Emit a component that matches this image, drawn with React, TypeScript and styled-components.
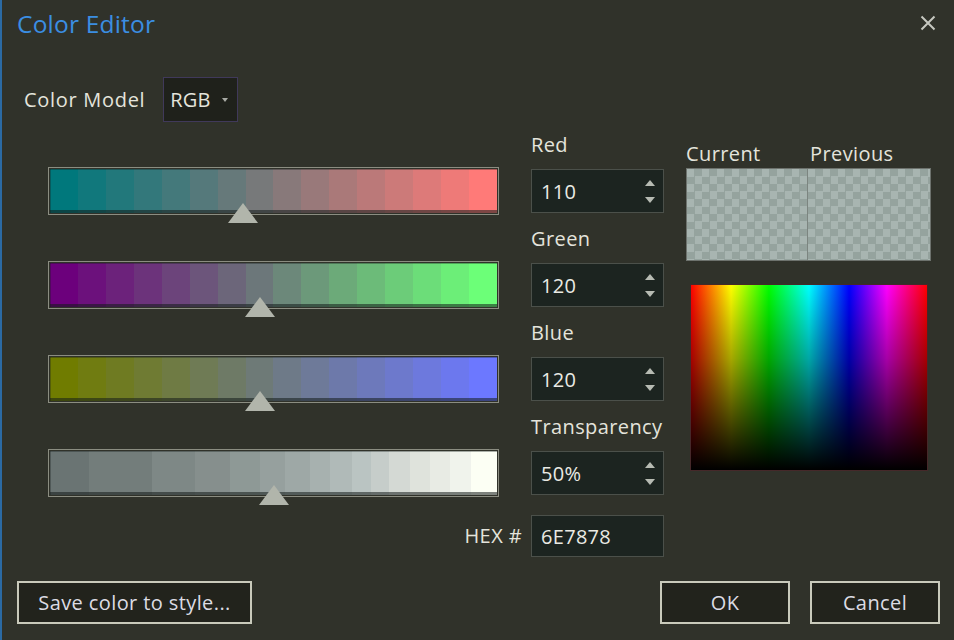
import styled, { createGlobalStyle } from "styled-components";

const GlobalStyle = createGlobalStyle`
  html, body {
    margin: 0;
    padding: 0;
    background: #30322a;
  }
  body {
    font-family: "Open Sans", "Noto Sans", "Liberation Sans", sans-serif;
    color: #e4e4dc;
  }
`;

const BG = "#30322a";

const Dialog = styled.div`
  width: 954px;
  height: 640px;
  box-sizing: border-box;
  border-left: 2px solid #2b6aa3;
  background: ${BG};
  display: flex;
  flex-direction: column;
`;

const Header = styled.div`
  height: 46px;
  display: flex;
  align-items: center;
  justify-content: space-between;
  padding: 0 17px 0 15px;
`;

const Title = styled.h1`
  margin: 0;
  font-size: 24.5px;
  font-weight: 400;
  color: #3b8ee2;
  letter-spacing: 0.2px;
`;

const CloseButton = styled.button`
  border: 0;
  background: none;
  padding: 0;
  width: 18px;
  height: 18px;
  display: flex;
  align-items: center;
  justify-content: center;
`;

const Body = styled.div`
  padding-left: 22px;
`;

const ModelRow = styled.div`
  margin-top: 31px;
  height: 45px;
  display: flex;
  align-items: center;
  gap: 18px;
`;

const Label = styled.span`
  font-size: 20px;
  letter-spacing: 0.4px;
  line-height: 28px;
  color: #e4e4dc;
  white-space: nowrap;
`;

const ModelLabel = styled(Label)`
  letter-spacing: 0.7px;
`;

const Dropdown = styled.div`
  box-sizing: border-box;
  width: 75px;
  height: 45px;
  background: #1f211b;
  border: 1px solid #40395a;
  display: flex;
  align-items: center;
  justify-content: space-between;
  padding: 0 9px 0 6px;
  font-size: 20px;
  letter-spacing: 0.2px;
`;

const Caret = styled.span`
  width: 0;
  height: 0;
  border-left: 3.5px solid transparent;
  border-right: 3.5px solid transparent;
  border-top: 4px solid #a8aaa4;
`;

const Main = styled.div`
  margin-top: 9px;
  margin-left: 24px;
  display: grid;
  grid-template-columns: 451px 133px 245px;
  column-gap: 32px;
  align-items: start;
`;

const SliderColumn = styled.div`
  padding-top: 36px;
  display: flex;
  flex-direction: column;
  gap: 46px;
`;

const SliderFrame = styled.div`
  position: relative;
  box-sizing: border-box;
  height: 48px;
  border: 1px solid #8b8d81;
  padding: 1px;
`;

const SliderTrack = styled.div<{ $bands: string }>`
  height: 100%;
  background: ${(p) => p.$bands};
  box-shadow: inset 0 -3px 0 rgba(20, 28, 26, 0.55),
    inset 0 1px 0 rgba(20, 28, 26, 0.35), inset 1px 0 0 rgba(20, 28, 26, 0.3);
`;

const Thumb = styled.div`
  position: absolute;
  bottom: -9px;
  width: 0;
  height: 0;
  margin-left: -15px;
  border-left: 15px solid transparent;
  border-right: 15px solid transparent;
  border-bottom: 20px solid #b1b5ab;
`;

const SpinColumn = styled.div`
  display: flex;
  flex-direction: column;
`;

const SpinGroup = styled.div`
  display: flex;
  flex-direction: column;
  gap: 10px;
  margin-bottom: 12px;
`;

const SpinBox = styled.div`
  box-sizing: border-box;
  height: 44px;
  background: #1c2420;
  border: 1px solid #4b504a;
  display: flex;
  align-items: center;
  justify-content: space-between;
  padding: 0 8px 0 9px;
  font-size: 20px;
  letter-spacing: 0.3px;
  color: #eaeae4;
`;

const Arrows = styled.div`
  display: flex;
  flex-direction: column;
  gap: 11px;
`;

const Arrow = styled.span<{ $down?: boolean }>`
  width: 0;
  height: 0;
  border-left: 5.5px solid transparent;
  border-right: 5.5px solid transparent;
  ${(p) =>
    p.$down
      ? "border-top: 6px solid #b7bbb3;"
      : "border-bottom: 6px solid #b7bbb3;"}
`;

const PreviewColumn = styled.div`
  margin-left: -10px;
  width: 245px;
  padding-top: 9px;
  display: flex;
  flex-direction: column;
`;

const PreviewLabels = styled.div`
  display: grid;
  grid-template-columns: 124px 1fr;
`;

const Swatch = styled.div`
  box-sizing: border-box;
  height: 93px;
  border: 1px solid #6d726d;
  display: grid;
  grid-template-columns: 121px 1fr;
`;

const SwatchHalf = styled.div<{ $left?: boolean }>`
  background-color: #a8b5b1;
  background-image: conic-gradient(
    #95a39e 25%,
    transparent 0 50%,
    #95a39e 0 75%,
    transparent 0
  );
  background-size: 15px 15px;
  ${(p) => (p.$left ? "border-right: 1px solid #7c8580;" : "")}
`;

const Spectrum = styled.div`
  margin: 24px 0 0 5px;
  width: 236px;
  height: 185px;
  box-shadow: 0 0 0 1px rgba(90, 30, 40, 0.5);
  background: linear-gradient(
      to bottom,
      rgba(0, 0, 0, 0) 0%,
      rgba(0, 0, 0, 0.35) 40%,
      #000 100%
    ),
    linear-gradient(
      to right,
      #ff0000 0%,
      #ffff00 17%,
      #00ff00 33%,
      #00ffff 50%,
      #0000ff 67%,
      #ff00ff 83%,
      #ff0000 100%
    );
`;

const HexRow = styled.div`
  grid-column: 1 / 3;
  margin-top: 8px;
  display: flex;
  justify-content: flex-end;
  align-items: center;
  gap: 9px;
`;

const HexInput = styled(SpinBox)`
  width: 133px;
  height: 42px;
`;

const Footer = styled.div`
  margin-top: auto;
  padding: 0 14px 16px 15px;
  display: flex;
  align-items: center;
  gap: 20px;
`;

const Button = styled.button<{ $wide?: boolean }>`
  box-sizing: border-box;
  height: 43px;
  width: ${(p) => (p.$wide ? "235px" : "130px")};
  background: #22231c;
  border: 2px solid #c9cabb;
  color: #dcdce4;
  font-family: inherit;
  font-size: 20px;
  letter-spacing: 0.4px;
  padding: 0;
`;

const Spacer = styled.div`
  flex: 1;
`;

// evenly spaced colour steps between two rgb values
const bands = (from: number[], to: number[], steps: number) => {
  const stops: string[] = [];
  for (let i = 0; i < steps; i++) {
    const t = i / (steps - 1);
    const c = from.map((f, k) => Math.round(f + (to[k] - f) * t));
    const a = ((i / steps) * 100).toFixed(2);
    const b = (((i + 1) / steps) * 100).toFixed(2);
    stops.push(`rgb(${c.join(",")}) ${a}% ${b}%`);
  }
  return `linear-gradient(to right, ${stops.join(", ")})`;
};

// the alpha strip ramps unevenly, so its steps are listed by hand
const alphaSteps: [number, string][] = [
  [8.7, "#6a7473"],
  [22.9, "#737d7b"],
  [32.5, "#7e8886"],
  [40.3, "#868f8d"],
  [47, "#8e9996"],
  [52.6, "#96a09e"],
  [58.1, "#9ea8a6"],
  [62.6, "#a7b1af"],
  [67.5, "#b0bab8"],
  [71.9, "#bac4c2"],
  [75.9, "#c6cdca"],
  [80.5, "#d4d9d4"],
  [85, "#dfe3dc"],
  [89.5, "#e8ebe4"],
  [94.2, "#f0f3ec"],
  [100, "#fcfff4"],
];

const alphaBands = () => {
  let prev = 0;
  const stops = alphaSteps.map(([end, color]) => {
    const s = `${color} ${prev}% ${end}%`;
    prev = end;
    return s;
  });
  return `linear-gradient(to right, ${stops.join(", ")})`;
};

const channels = [
  { label: "Red", value: "110", pos: 110 / 255, fill: bands([0, 120, 124], [255, 122, 120], 16) },
  { label: "Green", value: "120", pos: 120 / 255, fill: bands([108, 0, 124], [108, 255, 120], 16) },
  { label: "Blue", value: "120", pos: 120 / 255, fill: bands([112, 124, 0], [108, 120, 255], 16) },
  { label: "Transparency", value: "50%", pos: 0.5, fill: alphaBands() },
];

const App = () => {
  return (
    <>
      <GlobalStyle />
      <Dialog>
        <Header>
          <Title>Color Editor</Title>
          <CloseButton aria-label="Close">
            <svg width="16" height="16" viewBox="0 0 16 16">
              <path d="M1.5 1.5 L14.5 14.5 M14.5 1.5 L1.5 14.5" stroke="#c6c8c0" strokeWidth="2" />
            </svg>
          </CloseButton>
        </Header>

        <Body>
          <ModelRow>
            <ModelLabel>Color Model</ModelLabel>
            <Dropdown>
              RGB
              <Caret />
            </Dropdown>
          </ModelRow>

          <Main>
            {/* sliders */}
            <SliderColumn>
              {channels.map((c) => (
                <SliderFrame key={c.label}>
                  <SliderTrack $bands={c.fill} />
                  <Thumb style={{ left: `${c.pos * 100}%` }} />
                </SliderFrame>
              ))}
            </SliderColumn>

            {/* numeric inputs */}
            <SpinColumn>
              {channels.map((c) => (
                <SpinGroup key={c.label}>
                  <Label>{c.label}</Label>
                  <SpinBox>
                    {c.value}
                    <Arrows>
                      <Arrow />
                      <Arrow $down />
                    </Arrows>
                  </SpinBox>
                </SpinGroup>
              ))}
            </SpinColumn>

            {/* preview */}
            <PreviewColumn>
              <PreviewLabels>
                <Label>Current</Label>
                <Label>Previous</Label>
              </PreviewLabels>
              <Swatch>
                <SwatchHalf $left />
                <SwatchHalf />
              </Swatch>
              <Spectrum />
            </PreviewColumn>

            <HexRow>
              <Label>HEX #</Label>
              <HexInput>6E7878</HexInput>
            </HexRow>
          </Main>
        </Body>

        <Footer>
          <Button $wide>Save color to style...</Button>
          <Spacer />
          <Button>OK</Button>
          <Button>Cancel</Button>
        </Footer>
      </Dialog>
    </>
  );
};

export default App;
